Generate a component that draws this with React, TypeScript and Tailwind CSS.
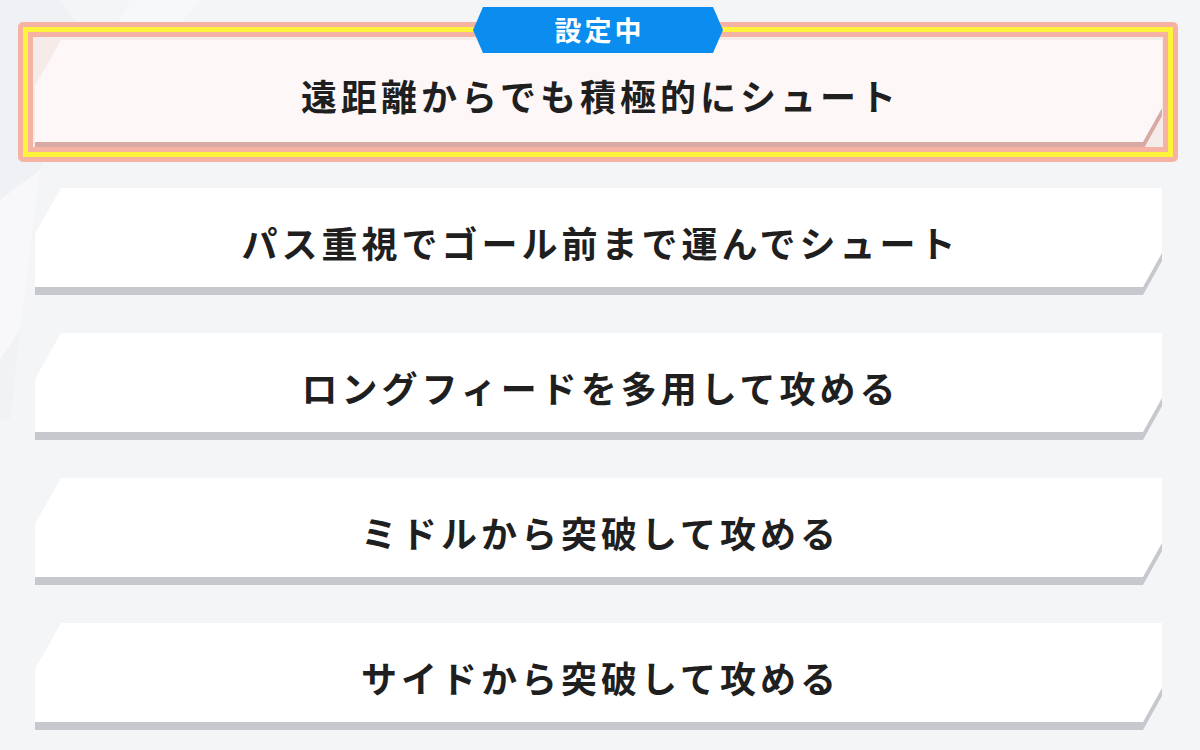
import React from "react";

const font = { fontFamily: '"Noto Sans CJK JP", "Noto Sans", sans-serif' };

const items = [
  "パス重視でゴール前まで運んでシュート",
  "ロングフィードを多用して攻める",
  "ミドルから突破して攻める",
  "サイドから突破して攻める",
];

function Card({ text, selected = false }: { text: string; selected?: boolean }) {
  return (
    <div className={selected ? "relative h-[110px] w-[1127px]" : "relative h-[107px] w-[1127px]"}>
      <div
        className={
          (selected ? "bg-[#d9aaa3] h-[102px]" : "bg-[#c7c8ce] h-[99px]") +
          " absolute left-0 right-0 top-[8px] [clip-path:polygon(26px_0,100%_0,100%_calc(100%_-_34px),calc(100%_-_19px)_100%,0_100%,0_46px)]"
        }
      />
      <div
        className={
          (selected ? "bg-[#fdf8f7] h-[102px]" : "bg-white h-[99px]") +
          " absolute left-0 right-0 top-0 [clip-path:polygon(26px_0,100%_0,100%_calc(100%_-_34px),calc(100%_-_19px)_100%,0_100%,0_46px)]"
        }
      />
      <div
        className={
          (selected ? "h-[110px]" : "h-[107px]") +
          " relative flex items-center justify-center pl-[4px] text-[36px] font-bold tracking-[4px] text-[#1f1f1f]"
        }
        style={font}
      >
        {text}
      </div>
    </div>
  );
}

export default function App() {
  return (
    <div className="relative flex h-[750px] w-[1200px] flex-col overflow-hidden bg-[#f4f5f7]" style={font}>
      <svg className="absolute left-0 top-0" width="200" height="420" viewBox="0 0 200 420">
        <polygon points="0,0 130,0 40,170 0,200" fill="#eceef1" opacity="0.5" />
        <polygon points="0,200 40,170 20,330 0,360" fill="#ffffff" opacity="0.35" />
        <polygon points="60,0 200,0 150,60 90,40" fill="#ffffff" opacity="0.3" />
        <polygon points="0,360 20,330 10,420 0,420" fill="#eceef1" opacity="0.4" />
      </svg>

      <div className="relative ml-[18px] mt-[22px] w-[1160px]">
        <div className="rounded-[5px] border-[5px] border-[#f6b3a3]">
          <div className="border-[5px] border-[#fff33c]">
            <div className="border-[5px] border-[#f6b3a3] bg-[#f5ebe9]">
              <div className="h-[110px] overflow-hidden pl-[2px] pt-[3px]">
                <Card text="遠距離からでも積極的にシュート" selected />
              </div>
            </div>
          </div>
        </div>
        <div className="absolute left-1/2 top-[-15px] flex h-[46px] w-[250px] -translate-x-1/2 items-center justify-center bg-[#0b8def] pl-[3px] text-[27px] font-bold tracking-[3px] text-white [clip-path:polygon(10px_0,240px_0,250px_50%,240px_100%,10px_100%,0_50%)]">
          設定中
        </div>
      </div>

      <div className="relative ml-[35px] mt-[26px] flex flex-col gap-[38px]">
        {items.map((t) => (
          <Card key={t} text={t} />
        ))}
      </div>
    </div>
  );
}
